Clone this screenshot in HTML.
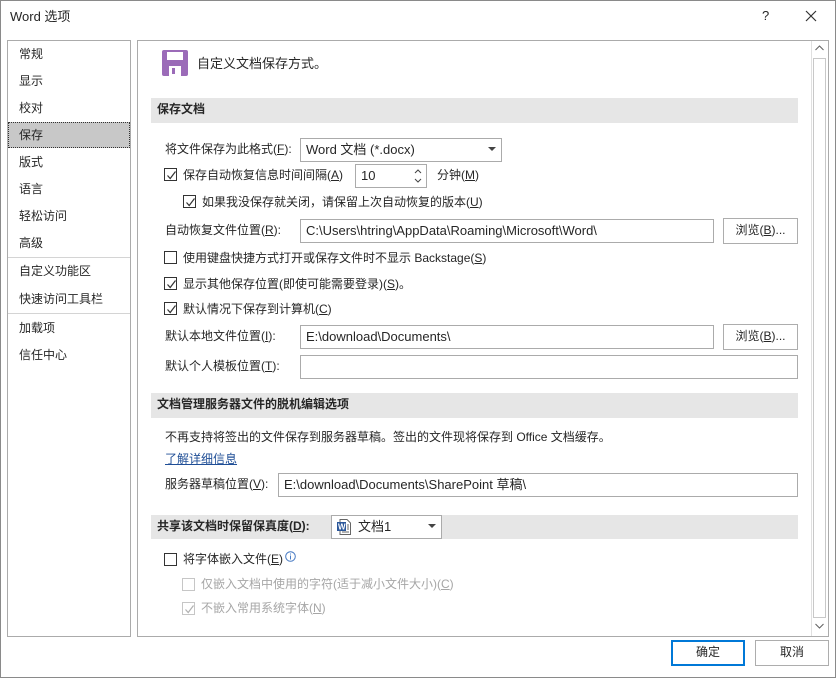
<!DOCTYPE html><html><head><meta charset="utf-8"><style>
*{margin:0;padding:0;box-sizing:border-box}
body{width:836px;height:678px;background:#fff;font-family:"Liberation Sans","Noto Sans CJK SC",sans-serif;font-size:12px;color:#262626;position:relative;overflow:hidden}
.a{position:absolute;white-space:nowrap;line-height:13px}
.win{position:absolute;left:0;top:0;width:836px;height:678px;border:1px solid #8a8a8a}
.box{position:absolute;border:1px solid #ababab;background:#fff}
.cb{position:absolute;width:13px;height:13px;border:1px solid #333;background:#fff}
.cb.d{border-color:#c6c6c6}
.cb svg{position:absolute;left:1px;top:1px}
.inp{position:absolute;border:1px solid #ababab;background:#fff;padding-left:5px;line-height:21px;height:24px;white-space:nowrap;font-size:13px}
.btn{position:absolute;border:1px solid #adadad;background:#fff;text-align:center;line-height:23px;height:26px}
.sh{position:absolute;left:151px;width:647px;height:25px;background:#e6e6e6;font-weight:bold;line-height:23px;padding-left:6px}
.nav{position:absolute;left:19px}
u{text-decoration:underline}
.g{color:#a6a6a6}
</style></head><body>
<div class="win"></div>
<div class="a" style="left:10px;top:10px;font-size:13px">Word 选项</div>
<div class="a" style="left:762px;top:9px;font-size:13px">?</div>
<svg class="a" style="left:805px;top:10px" width="12" height="12"><path d="M1 1L11 11M11 1L1 11" stroke="#333" stroke-width="1.2"/></svg>

<div class="box" style="left:7px;top:40px;width:124px;height:597px"></div>
<div class="a" style="left:8px;top:122px;width:122px;height:26px;background:#c8c8c8;border:1px dotted #333"></div>
<div class="nav a" style="top:48px">常规</div>
<div class="nav a" style="top:75px">显示</div>
<div class="nav a" style="top:102px">校对</div>
<div class="nav a" style="top:129px">保存</div>
<div class="nav a" style="top:156px">版式</div>
<div class="nav a" style="top:183px">语言</div>
<div class="nav a" style="top:210px">轻松访问</div>
<div class="nav a" style="top:237px">高级</div>
<div class="a" style="left:8px;top:257px;width:122px;height:1px;background:#d4d4d4"></div>
<div class="nav a" style="top:265px">自定义功能区</div>
<div class="nav a" style="top:293px">快速访问工具栏</div>
<div class="a" style="left:8px;top:313px;width:122px;height:1px;background:#d4d4d4"></div>
<div class="nav a" style="top:322px">加载项</div>
<div class="nav a" style="top:349px">信任中心</div>

<div class="box" style="left:137px;top:40px;width:692px;height:597px"></div>
<div class="a" style="left:811px;top:41px;width:17px;height:595px;border-left:1px solid #e0e0e0"></div>
<svg class="a" style="left:815px;top:45px" width="9" height="6"><path d="M0.5 5L4.5 1L8.5 5" stroke="#606060" fill="none"/></svg>
<svg class="a" style="left:815px;top:623px" width="9" height="6"><path d="M0.5 1L4.5 5L8.5 1" stroke="#606060" fill="none"/></svg>
<div class="a" style="left:813px;top:58px;width:13px;height:560px;border:1px solid #c8c8c8"></div>

<svg class="a" style="left:162px;top:50px" width="26" height="26"><rect x="0" y="0" width="26" height="26" rx="2" fill="#9b6bb8"/><rect x="5" y="2" width="16" height="8" fill="#fff"/><rect x="7" y="16" width="12" height="10" fill="#fff"/><rect x="10" y="18" width="3" height="6" fill="#9b6bb8"/></svg>
<div class="a" style="left:197px;top:57px;font-size:13px">自定义文档保存方式。</div>

<div class="sh" style="top:98px">保存文档</div>
<div class="a" style="left:165px;top:143px">将文件保存为此格式(<u>F</u>):</div>
<div class="inp" style="left:300px;top:138px;width:202px">Word 文档 (*.docx)</div>
<svg class="a" style="left:488px;top:147px" width="8" height="5"><path d="M0 0H8L4 4Z" fill="#444"/></svg>

<div class="cb" style="left:164px;top:168px"><svg width="11" height="11"><path d="M1.5 5.5L4.2 8.5L9.5 1.5" stroke="#333" fill="none" stroke-width="1.2"/></svg></div>
<div class="a" style="left:183px;top:169px">保存自动恢复信息时间间隔(<u>A</u>)</div>
<div class="inp" style="left:355px;top:164px;width:72px">10</div>
<svg class="a" style="left:414px;top:168px" width="8" height="16"><path d="M1 5L4 2L7 5M1 11L4 14L7 11" stroke="#444" fill="none"/></svg>
<div class="a" style="left:437px;top:169px">分钟(<u>M</u>)</div>

<div class="cb" style="left:183px;top:195px"><svg width="11" height="11"><path d="M1.5 5.5L4.2 8.5L9.5 1.5" stroke="#333" fill="none" stroke-width="1.2"/></svg></div>
<div class="a" style="left:202px;top:196px">如果我没保存就关闭，请保留上次自动恢复的版本(<u>U</u>)</div>

<div class="a" style="left:165px;top:224px">自动恢复文件位置(<u>R</u>):</div>
<div class="inp" style="left:300px;top:219px;width:414px">C:\Users\htring\AppData\Roaming\Microsoft\Word\</div>
<div class="btn" style="left:723px;top:218px;width:75px">浏览(<u>B</u>)...</div>

<div class="cb" style="left:164px;top:251px"></div>
<div class="a" style="left:183px;top:252px">使用键盘快捷方式打开或保存文件时不显示 Backstage(<u>S</u>)</div>
<div class="cb" style="left:164px;top:277px"><svg width="11" height="11"><path d="M1.5 5.5L4.2 8.5L9.5 1.5" stroke="#333" fill="none" stroke-width="1.2"/></svg></div>
<div class="a" style="left:183px;top:278px">显示其他保存位置(即使可能需要登录)(<u>S</u>)。</div>
<div class="cb" style="left:164px;top:302px"><svg width="11" height="11"><path d="M1.5 5.5L4.2 8.5L9.5 1.5" stroke="#333" fill="none" stroke-width="1.2"/></svg></div>
<div class="a" style="left:183px;top:303px">默认情况下保存到计算机(<u>C</u>)</div>

<div class="a" style="left:165px;top:330px">默认本地文件位置(<u>I</u>):</div>
<div class="inp" style="left:300px;top:325px;width:414px">E:\download\Documents\</div>
<div class="btn" style="left:723px;top:324px;width:75px">浏览(<u>B</u>)...</div>
<div class="a" style="left:165px;top:360px">默认个人模板位置(<u>T</u>):</div>
<div class="inp" style="left:300px;top:355px;width:498px"></div>

<div class="sh" style="top:393px">文档管理服务器文件的脱机编辑选项</div>
<div class="a" style="left:165px;top:431px">不再支持将签出的文件保存到服务器草稿。签出的文件现将保存到 Office 文档缓存。</div>
<div class="a" style="left:165px;top:453px;color:#1f4e96"><u>了解详细信息</u></div>
<div class="a" style="left:165px;top:478px">服务器草稿位置(<u>V</u>):</div>
<div class="inp" style="left:278px;top:473px;width:520px">E:\download\Documents\SharePoint 草稿\</div>

<div class="sh" style="top:515px;height:24px;line-height:22px">共享该文档时保留保真度(<u>D</u>):</div>
<div class="inp" style="left:331px;top:515px;width:111px;padding-left:26px">文档1</div>
<svg class="a" style="left:337px;top:519px" width="14" height="16"><path d="M3 0.5H10L13.5 4V15.5H3Z" fill="#fff" stroke="#666"/><rect x="0" y="3" width="9" height="9" fill="#2b579a"/><text x="1" y="10.5" font-size="8" fill="#fff" font-family="Liberation Sans" font-weight="bold">W</text><path d="M10 6H12M10 8H12M10 10H12M5 13H12" stroke="#666"/></svg>
<svg class="a" style="left:428px;top:524px" width="8" height="5"><path d="M0 0H8L4 4Z" fill="#444"/></svg>

<div class="cb" style="left:164px;top:553px"></div>
<div class="a" style="left:183px;top:553px">将字体嵌入文件(<u>E</u>)</div>
<svg class="a" style="left:285px;top:551px" width="11" height="11"><circle cx="5.5" cy="5.5" r="4.8" fill="none" stroke="#4a7cc4"/><path d="M5.5 4.5V8.5M5.5 2.5V3.5" stroke="#4a7cc4"/></svg>
<div class="cb d" style="left:182px;top:578px"></div>
<div class="a g" style="left:201px;top:578px">仅嵌入文档中使用的字符(适于减小文件大小)(<u>C</u>)</div>
<div class="cb d" style="left:182px;top:602px"><svg width="11" height="11"><path d="M1.5 5.5L4.2 8.5L9.5 1.5" stroke="#b0b0b0" fill="none" stroke-width="1.2"/></svg></div>
<div class="a g" style="left:201px;top:602px">不嵌入常用系统字体(<u>N</u>)</div>

<div class="btn" style="left:671px;top:640px;width:74px;border:1px solid #0078d7;box-shadow:inset 0 0 0 1px #0078d7">确定</div>
<div class="btn" style="left:755px;top:640px;width:74px">取消</div>
</body></html>
